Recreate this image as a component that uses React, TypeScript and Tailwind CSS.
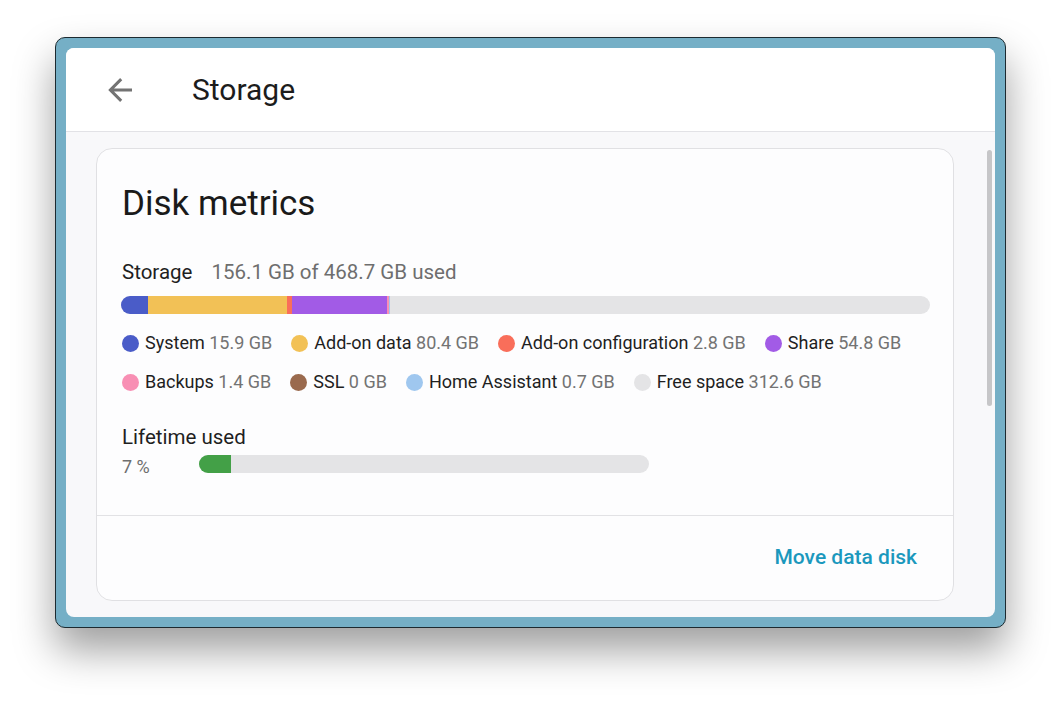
interface Segment {
  name: string
  size: number
  color: string
}

const TOTAL = 468.7

const segments: Segment[] = [
  { name: 'System', size: 15.9, color: '#4a5cc8' },
  { name: 'Add-on data', size: 80.4, color: '#f2c156' },
  { name: 'Add-on configuration', size: 2.8, color: '#f96e5a' },
  { name: 'Share', size: 54.8, color: '#a25be6' },
  { name: 'Backups', size: 1.4, color: '#f88fb4' },
  { name: 'SSL', size: 0, color: '#9a6a4e' },
  { name: 'Home Assistant', size: 0.7, color: '#9fc7ef' },
]

const legend: Segment[] = [...segments, { name: 'Free space', size: 312.6, color: '#e4e4e6' }]

function LegendItem({ item }: { item: Segment }) {
  return (
    <div className="flex items-center gap-[6px]">
      <span className="h-[17px] w-[17px] rounded-full" style={{ backgroundColor: item.color }} />
      <span className="text-[#1f1f1f]">
        {item.name} <span className="text-[#737373]">{item.size} GB</span>
      </span>
    </div>
  )
}

export default function App() {
  return (
    <div
      className="h-[701px] w-[1061px] bg-white pl-[55px] pt-[37px]"
      style={{ fontFamily: 'Roboto, "Noto Sans", sans-serif' }}
    >
      <div className="h-[591px] w-[951px] rounded-[10px] border border-[#1c2a30] bg-[#75afc6] p-[10px] shadow-[0_22px_40px_rgba(0,0,0,0.38)]">
        <div className="flex h-full flex-col overflow-hidden rounded-[8px] bg-[#f8f8fa]">
          <div className="flex h-[84px] shrink-0 items-center border-b border-[#e2e2e6] bg-white">
            <svg viewBox="0 0 24 24" className="ml-[36px] h-[36px] w-[36px] fill-[#737373]">
              <path d="M20,11V13H8L13.5,18.5L12.08,19.92L4.16,12L12.08,4.08L13.5,5.5L8,11H20Z" />
            </svg>
            <h1 className="ml-[54px] text-[30px] text-[#1c1c1c]">Storage</h1>
          </div>

          <div className="flex flex-1">
            <div className="ml-[30px] mt-[16px] flex h-[453px] w-[858px] flex-col rounded-[16px] border border-[#e0e0e3] bg-[#fdfdfe]">
              <div className="px-[25px] pt-[35px]">
                <h2 className="text-[35px] leading-[40px] text-[#1a1a1a]">Disk metrics</h2>

                <div className="mt-[36px] flex items-baseline gap-[19px] text-[20.5px] leading-[24px]">
                  <span className="text-[#1f1f1f]">Storage</span>
                  <span className="text-[#6e6e6e]">156.1 GB of 468.7 GB used</span>
                </div>

                <div className="mt-[12px] -ml-px flex h-[18px] w-[809px] overflow-hidden rounded-full bg-[#e4e4e6]">
                  {segments.map((s) => (
                    <div
                      key={s.name}
                      className="h-full"
                      style={{ width: `${(s.size / TOTAL) * 100}%`, backgroundColor: s.color }}
                    />
                  ))}
                </div>

                <div className="mt-[17px] flex flex-col gap-[15px] text-[18px] leading-[24px]">
                  <div className="flex gap-[19px]">
                    {legend.slice(0, 4).map((item) => (
                      <LegendItem key={item.name} item={item} />
                    ))}
                  </div>
                  <div className="flex gap-[19px]">
                    {legend.slice(4).map((item) => (
                      <LegendItem key={item.name} item={item} />
                    ))}
                  </div>
                </div>

                <div className="mt-[31px] text-[20.5px] leading-[24px] text-[#1f1f1f]">Lifetime used</div>
                <div className="mt-[6px] flex h-[18px] items-center">
                  <span className="w-[77px] pt-[4px] text-[18px] text-[#6e6e6e]">7 %</span>
                  <div className="h-[18px] w-[450px] overflow-hidden rounded-full bg-[#e4e4e6]">
                    <div className="h-full bg-[#43a047]" style={{ width: '7%' }} />
                  </div>
                </div>
              </div>

              <div className="mt-auto flex h-[85px] items-center justify-end border-t border-[#e2e2e5] pr-[36px]">
                <button className="text-[21px] font-medium text-[#1b98bd]">Move data disk</button>
              </div>
            </div>

            <div className="ml-auto mr-[3px] mt-[18px] h-[256px] w-[5px] rounded-full bg-[#c6c6c8]" />
          </div>
        </div>
      </div>
    </div>
  )
}
